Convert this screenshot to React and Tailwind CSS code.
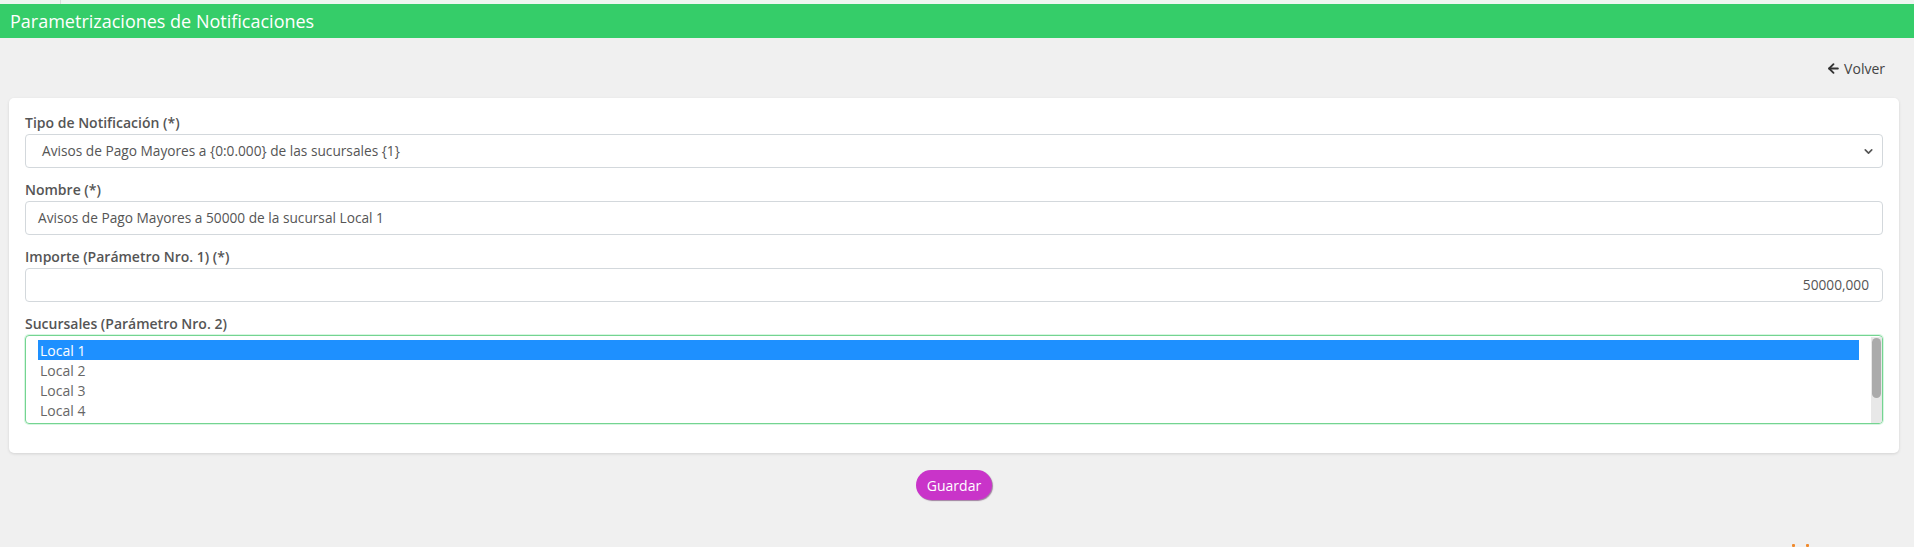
import { ArrowLeft, ChevronDown } from "lucide-react"

const sucursales = ["Local 1", "Local 2", "Local 3", "Local 4"]

function Field({ label, children }) {
    return (
        <div className="flex flex-col">
            <label className="text-[14px] leading-[20px] font-semibold text-[#555] mb-[1px]">{label}</label>
            {children}
        </div>
    )
}

function App() {
    return (
        <div className="relative min-h-screen w-full bg-[#f0f0f0] font-['Open_Sans',sans-serif] overflow-hidden">
            <div className="h-[4px] bg-[#eef6f0] flex">
                <div className="w-[61px] border-r border-[#d8dcd9]"></div>
            </div>
            <div className="h-[34px] bg-[#35cd69] px-[10px] flex items-center">
                <h1 className="text-[18px] text-white">Parametrizaciones de Notificaciones</h1>
            </div>

            <div className="flex justify-end pt-[19px] pr-[29px] h-[60px]">
                <button className="flex items-center gap-[3px] h-[22px] text-[14px] text-[#444]">
                    <ArrowLeft size={15} strokeWidth={3} className="text-[#333]" />
                    Volver
                </button>
            </div>

            <div className="ml-[9px] mr-[15px] bg-white rounded-[5px] shadow-[0_1px_3px_rgba(0,0,0,0.12)] px-[16px] pt-[15px] pb-[29px] flex flex-col gap-[12px]">
                <Field label="Tipo de Notificación (*)">
                    <div className="h-[34px] border border-[#d3d8dc] rounded-[4px] flex items-center justify-between pl-[16px] pr-[7px] text-[13.7px] text-[#555]">
                        <span>Avisos de Pago Mayores a {"{0:0.000}"} de las sucursales {"{1}"}</span>
                        <ChevronDown size={13} strokeWidth={3} className="text-[#555]" />
                    </div>
                </Field>

                <Field label="Nombre (*)">
                    <div className="h-[34px] border border-[#d3d8dc] rounded-[4px] flex items-center px-[12px] text-[13.7px] text-[#555]">
                        Avisos de Pago Mayores a 50000 de la sucursal Local 1
                    </div>
                </Field>

                <Field label="Importe (Parámetro Nro. 1) (*)">
                    <div className="h-[34px] border border-[#d3d8dc] rounded-[4px] flex items-center justify-end px-[13px] text-[13.7px] text-[#555]">
                        50000,000
                    </div>
                </Field>

                <Field label="Sucursales (Parámetro Nro. 2)">
                    <div className="h-[89px] border border-[#74d491] rounded-[4px] shadow-[0_0_0_1px_rgba(140,230,170,0.35)] flex pl-[12px] pt-[4px] overflow-hidden">
                        <div className="flex-1 flex flex-col">
                            {sucursales.map((s, i) => (
                                <div key={s}
                                    className={i === 0
                                        ? "h-[20px] flex items-center px-[2px] text-[14px] bg-[#1e90ff] text-white"
                                        : "h-[20px] flex items-center px-[2px] text-[14px] text-[#666]"}
                                >
                                    {s}
                                </div>
                            ))}
                        </div>
                        <div className="w-[11px] ml-[12px] -mt-[3px] bg-[#e8e8e8] flex flex-col">
                            <div className="h-[60px] mx-[1px] mt-[1px] rounded-full bg-[#ababab]"></div>
                        </div>
                    </div>
                </Field>
            </div>

            <div className="ml-[9px] mr-[15px] flex justify-center pt-[17px]">
                <button className="h-[30px] w-[76px] rounded-full bg-[#c934c9] text-white text-[14px] shadow-[1px_1px_1px_rgba(80,20,80,0.5)]">
                    Guardar
                </button>
            </div>

            <div className="absolute left-[1792px] top-[544px] flex gap-[11px]">
                <div className="w-[3px] h-[3px] bg-[#f08a2c] rounded-[1px]"></div>
                <div className="w-[3px] h-[3px] bg-[#f08a2c] rounded-[1px]"></div>
            </div>
        </div>
    )
}

export default App
